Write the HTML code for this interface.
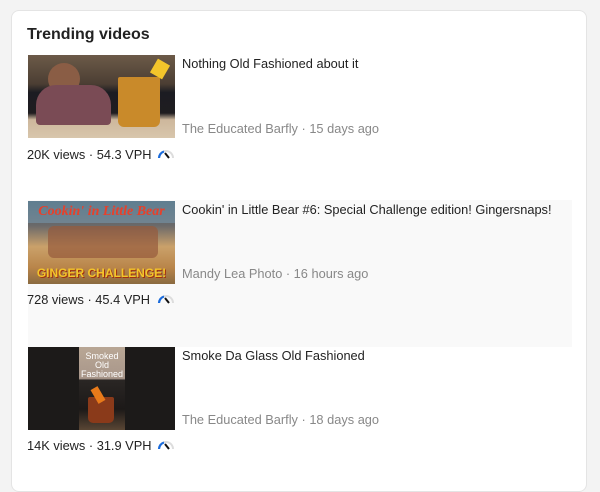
<!DOCTYPE html>
<html><head><meta charset="utf-8"><style>
body{margin:0;width:600px;height:473px;background:#f3f3f3;font-family:"Liberation Sans",Arial,sans-serif;overflow:hidden;position:relative}
.card{position:absolute;left:11px;top:10px;width:574px;height:480px;background:#fff;border:1px solid #e4e4e4;border-radius:8px}
h1{position:absolute;left:27px;top:26px;margin:0;font-size:16px;font-weight:bold;color:#222;}
.hl{position:absolute;left:28px;top:200px;width:544px;height:147px;background:#f9f9f9}
.th{position:absolute;left:28px;width:147px;height:83px;overflow:hidden}
.t{position:absolute;left:182px;font-size:12.8px;color:#222}
.c{position:absolute;left:182px;font-size:12.8px;color:#888}
.v{position:absolute;left:27px;font-size:12.8px;color:#222}
.g{position:absolute;width:18px;height:12px}
</style></head><body>
<div class="card"></div>
<h1>Trending videos</h1>
<div class="hl"></div>

<div class="th" style="top:55px;background:linear-gradient(#6c5a48 0,#4b3e33 35%,#1c1c22 45%,#1f1d20 70%,#cdb79c 78%,#d8c6ac 100%)">
 <div style="position:absolute;left:20px;top:8px;width:32px;height:32px;border-radius:50%;background:#8a5d45"></div>
 <div style="position:absolute;left:8px;top:30px;width:75px;height:40px;background:#7a4b55;border-radius:20px 20px 4px 4px"></div>
 <div style="position:absolute;left:90px;top:22px;width:42px;height:50px;background:#c98a2a;border-radius:2px 2px 6px 6px"></div>
 <div style="position:absolute;left:125px;top:6px;width:14px;height:16px;background:#f3c52b;transform:rotate(30deg)"></div>
</div>
<div class="t" style="top:56px">Nothing Old Fashioned about it</div>
<div class="c" style="top:121px">The Educated Barfly · 15 days ago</div>
<div class="v" style="top:147px">20K views · 54.3 VPH</div>

<div class="th" style="top:201px;background:linear-gradient(#3c5a6a 0,#6c6a6a 30%,#caa16a 55%,#b9854a 80%,#8a6a40 100%)">
 <div style="position:absolute;left:0;top:0;width:147px;height:22px;background:rgba(120,150,170,.6);color:#e8402a;font:italic bold 14px 'Liberation Serif',serif;text-align:center;line-height:22px">Cookin' in Little Bear</div>
 <div style="position:absolute;left:20px;top:25px;width:110px;height:32px;background:rgba(150,90,60,.7);border-radius:6px"></div>
 <div style="position:absolute;left:0;top:62px;width:147px;height:21px;color:#f4c52a;font:bold 12px 'Liberation Sans',sans-serif;text-align:center;line-height:21px;white-space:nowrap;text-shadow:1px 1px 0 #a03010">GINGER CHALLENGE!</div>
</div>
<div class="t" style="top:202px">Cookin' in Little Bear #6: Special Challenge edition! Gingersnaps!</div>
<div class="c" style="top:266px">Mandy Lea Photo · 16 hours ago</div>
<div class="v" style="top:292px">728 views · 45.4 VPH</div>

<div class="th" style="top:347px;background:#1c1a19">
 <div style="position:absolute;left:51px;top:0;width:46px;height:83px;background:linear-gradient(#b9a795 0,#a8968a 38%,#2a2624 40%,#1c1918 75%,#5a4634 100%)"></div>
 <div style="position:absolute;left:51px;top:5px;width:46px;color:#fff;font:9px 'Liberation Sans',sans-serif;text-align:center;line-height:9px">Smoked<br>Old<br>Fashioned</div>
 <div style="position:absolute;left:60px;top:50px;width:26px;height:26px;background:#8a3a1a;border-radius:2px 2px 5px 5px"></div>
 <div style="position:absolute;left:66px;top:40px;width:8px;height:16px;background:#e87a1a;transform:rotate(-30deg)"></div>
</div>
<div class="t" style="top:348px">Smoke Da Glass Old Fashioned</div>
<div class="c" style="top:412px">The Educated Barfly · 18 days ago</div>
<div class="v" style="top:438px">14K views · 31.9 VPH</div>

<svg class="g" style="left:157px;top:148px" viewBox="0 0 18 12"><path d="M2 10A7 7 0 0 1 16 10" fill="none" stroke="#ddd" stroke-width="2"/><path d="M2 10A7 7 0 0 1 7 3.5" fill="none" stroke="#1a6bdc" stroke-width="2.2"/><path d="M8 5L12 10" stroke="#111" stroke-width="2"/></svg>
<svg class="g" style="left:157px;top:293px" viewBox="0 0 18 12"><path d="M2 10A7 7 0 0 1 16 10" fill="none" stroke="#ddd" stroke-width="2"/><path d="M2 10A7 7 0 0 1 7 3.5" fill="none" stroke="#1a6bdc" stroke-width="2.2"/><path d="M8 5L12 10" stroke="#111" stroke-width="2"/></svg>
<svg class="g" style="left:157px;top:439px" viewBox="0 0 18 12"><path d="M2 10A7 7 0 0 1 16 10" fill="none" stroke="#ddd" stroke-width="2"/><path d="M2 10A7 7 0 0 1 7 3.5" fill="none" stroke="#1a6bdc" stroke-width="2.2"/><path d="M8 5L12 10" stroke="#111" stroke-width="2"/></svg>
</body></html>
